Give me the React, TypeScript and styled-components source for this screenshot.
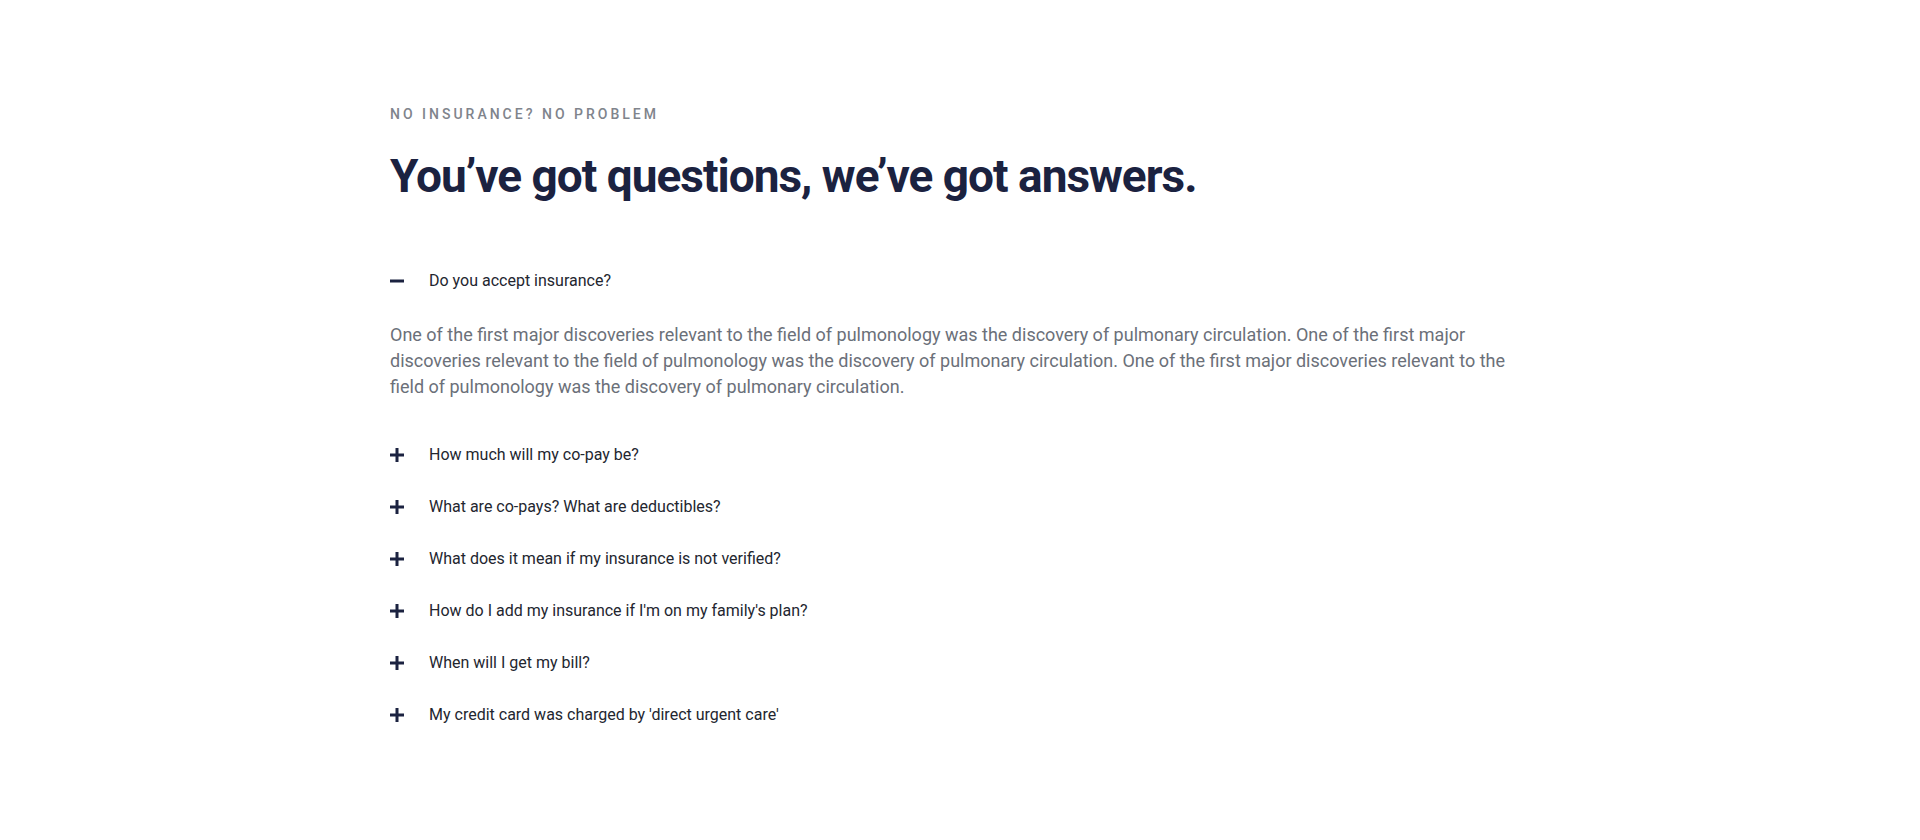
import React, { useState } from "react";
import styled, { createGlobalStyle } from "styled-components";

const GlobalStyle = createGlobalStyle`
  html, body {
    margin: 0;
    padding: 0;
    background: #ffffff;
  }
  body {
    font-family: Roboto, "Liberation Sans", sans-serif;
    -webkit-font-smoothing: antialiased;
  }
`;

const Section = styled("section")`
  width: 100%;
  padding: 104px 0 80px;
  box-sizing: border-box;
`;

const Container = styled("div")`
  max-width: 1140px;
  margin: 0 auto;
`;

const Eyebrow = styled("p")`
  margin: 0;
  font-size: 14px;
  line-height: 20px;
  font-weight: 500;
  letter-spacing: 3px;
  text-transform: uppercase;
  color: #80848c;
`;

const Heading = styled("h2")`
  margin: 25px 0 51px;
  font-size: 46px;
  line-height: 55px;
  font-weight: 700;
  letter-spacing: -1px;
  color: #1b2240;
`;

const List = styled("div")`
  display: flex;
  flex-direction: column;
`;

const Item = styled("div")`
  display: flex;
  flex-direction: column;
`;

const Question = styled("button")`
  display: flex;
  align-items: center;
  padding: 16px 0;
  margin: 0;
  border: 0;
  background: none;
  cursor: pointer;
  text-align: left;
  font-family: inherit;
  font-size: 16px;
  line-height: 20px;
  font-weight: 400;
  color: #23262f;
`;

const IconBox = styled("span")`
  display: inline-flex;
  align-items: center;
  width: 39px;
  flex-shrink: 0;
`;

const Answer = styled("p")`
  margin: 0;
  padding: 15px 0 29px;
  font-size: 18px;
  line-height: 26px;
  font-weight: 400;
  color: #6b7079;
`;

const Icon = ({ open }: { open: boolean }) => (
  <svg width="14" height="14" viewBox="0 0 14 14">
    <rect x="0" y="5.5" width="14" height="3" fill="#1b2240" />
    {!open && <rect x="5.5" y="0" width="3" height="14" fill="#1b2240" />}
  </svg>
);

const answer =
  "One of the first major discoveries relevant to the field of pulmonology was the discovery of pulmonary circulation. One of the first major discoveries relevant to the field of pulmonology was the discovery of pulmonary circulation. One of the first major discoveries relevant to the field of pulmonology was the discovery of pulmonary circulation.";

const questions = [
  "Do you accept insurance?",
  "How much will my co-pay be?",
  "What are co-pays? What are deductibles?",
  "What does it mean if my insurance is not verified?",
  "How do I add my insurance if I'm on my family's plan?",
  "When will I get my bill?",
  "My credit card was charged by 'direct urgent care'",
];

export default function App() {
  const [openIndex, setOpenIndex] = useState<number | null>(0);

  return (
    <>
      <GlobalStyle />
      <Section>
        <Container>
          <Eyebrow>No insurance? No problem</Eyebrow>
          <Heading>You’ve got questions, we’ve got answers.</Heading>
          <List>
            {questions.map((q, i) => {
              const open = openIndex === i;
              return (
                <Item key={q}>
                  <Question onClick={() => setOpenIndex(open ? null : i)}>
                    <IconBox>
                      <Icon open={open} />
                    </IconBox>
                    {q}
                  </Question>
                  {open && <Answer>{answer}</Answer>}
                </Item>
              );
            })}
          </List>
        </Container>
      </Section>
    </>
  );
}
